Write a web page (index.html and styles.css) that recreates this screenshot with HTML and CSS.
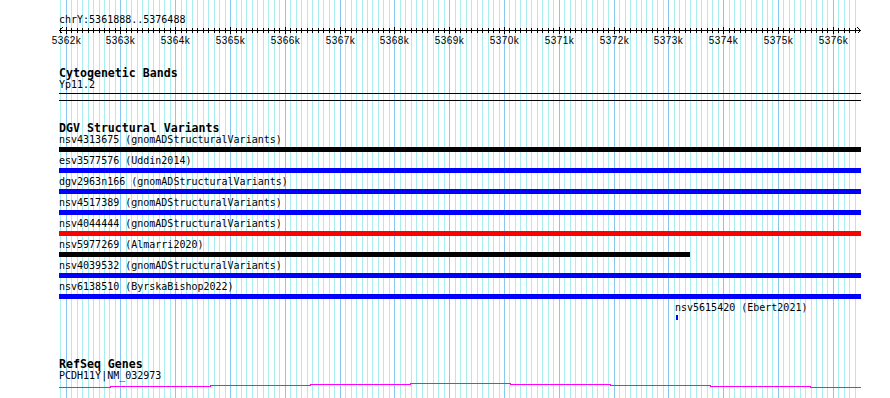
FILE: index.html
```html
<!DOCTYPE html>
<html lang="en">
<head>
    <meta charset="UTF-8">
    <title>chrY:5361888..5376488</title>
    <link rel="stylesheet" href="styles.css">
</head>
<body>

<div class="browser">
    <svg class="grid" id="grid" width="890" height="398"></svg>

    <!-- Position ruler -->
    <div class="track ruler-track">
        <div class="pos-label">chrY:5361888..5376488</div>
        <svg class="ruler" id="ruler" width="802" height="22"></svg>
    </div>

    <div class="track band-track">
        <div class="track-title">Cytogenetic Bands</div>
        <div class="feature-label">Yp11.2</div>
        <div class="band"></div>
    </div>

    <div class="track dgv-track">
        <div class="track-title">DGV Structural Variants</div>
        <div class="feature">
            <div class="feature-label">nsv4313675 (gnomADStructuralVariants)</div>
            <div class="bar bar-black"></div>
        </div>
        <div class="feature">
            <div class="feature-label">esv3577576 (Uddin2014)</div>
            <div class="bar bar-blue"></div>
        </div>
        <div class="feature">
            <div class="feature-label">dgv2963n166 (gnomADStructuralVariants)</div>
            <div class="bar bar-blue"></div>
        </div>
        <div class="feature">
            <div class="feature-label">nsv4517389 (gnomADStructuralVariants)</div>
            <div class="bar bar-blue"></div>
        </div>
        <div class="feature">
            <div class="feature-label">nsv4044444 (gnomADStructuralVariants)</div>
            <div class="bar bar-red"></div>
        </div>
        <div class="feature">
            <div class="feature-label">nsv5977269 (Almarri2020)</div>
            <div class="bar bar-black" style="width: 631px"></div>
        </div>
        <div class="feature">
            <div class="feature-label">nsv4039532 (gnomADStructuralVariants)</div>
            <div class="bar bar-blue"></div>
        </div>
        <div class="feature">
            <div class="feature-label">nsv6138510 (ByrskaBishop2022)</div>
            <div class="bar bar-blue"></div>
        </div>
        <div class="feature">
            <div class="feature-label" style="margin-left: 616px">nsv5615420 (Ebert2021)</div>
            <div class="bar bar-blue" style="margin-left: 617px; width: 2px"></div>
        </div>
    </div>

    <div class="track refseq-track">
        <div class="track-title">RefSeq Genes</div>
        <div class="feature-label">PCDH11Y|NM_032973</div>
        <svg class="gene" width="802" height="8">
            <polyline points="0,5.5 51,5.5 51,4.5 151,4.5 151,3.5 251,3.5 251,2.5 351,2.5 351,1.5 451,1.5 451,2.5 551,2.5 551,3.5 651,3.5 651,4.5 751,4.5 751,5.5 802,5.5"></polyline>
        </svg>
    </div>
</div>

<script>
    const NS = "http://www.w3.org/2000/svg";
    const start = 5361888;
    const end = 5376488;
    const scale = 800 / (end - start);

    function px(pos) {
        return Math.floor(60 + (pos - start) * scale);
    }

    function line(parent, x1, y1, x2, y2, cls) {
        const el = document.createElementNS(NS, "line");
        el.setAttribute("x1", x1);
        el.setAttribute("y1", y1);
        el.setAttribute("x2", x2);
        el.setAttribute("y2", y2);
        if (cls) el.setAttribute("class", cls);
        parent.appendChild(el);
    }

    const grid = document.getElementById("grid");
    const ruler = document.getElementById("ruler");

    // ruler axis with arrow heads on both ends
    line(ruler, 0, 4.5, 801, 4.5);
    line(ruler, 0.5, 4.5, 3.5, 1.5);
    line(ruler, 0.5, 4.5, 3.5, 7.5);
    line(ruler, 801.5, 4.5, 798.5, 1.5);
    line(ruler, 801.5, 4.5, 798.5, 7.5);

    for (let pos = 5361900; pos < end; pos += 100) {
        const x = px(pos);
        const major = pos % 1000 === 0;
        line(grid, x + 0.5, 0, x + 0.5, 398, major ? "major" : "minor");

        const rx = x - 59 + 0.5;
        if (major) {
            line(ruler, rx, 1, rx, 8);
            const label = document.createElementNS(NS, "text");
            label.setAttribute("x", rx);
            label.setAttribute("y", 17.5);
            label.textContent = (pos / 1000) + "k";
            ruler.appendChild(label);
        } else {
            line(ruler, rx, 2, rx, 7);
        }
    }
</script>

</body>
</html>
```

FILE: styles.css
```css
body {
    margin: 0;
    background-color: white;
    color: #000;
    font-family: "DejaVu Sans Mono", "Liberation Mono", monospace;
}

.browser {
    position: relative;
    width: 890px;
    height: 398px;
    padding-left: 59px;
    box-sizing: border-box;
    overflow: hidden;
}

/* background grid: one line per 100 bp, darker every kb */
.grid {
    position: absolute;
    top: 0;
    left: 0;
    shape-rendering: crispEdges;
}

.grid .minor {
    stroke: #aaeef0;
    stroke-width: 1;
}

.grid .major {
    stroke: #88c8f0;
    stroke-width: 1;
}

.track {
    position: relative;
    width: 802px;
}

.ruler-track {
    padding-top: 14px;
}

.pos-label {
    font-size: 10px;
    line-height: 12px;
}

.ruler {
    display: block;
    overflow: visible;
}

.ruler line {
    stroke: #000;
    stroke-width: 1;
    shape-rendering: crispEdges;
}

.ruler text {
    font-family: "Liberation Sans", Arial, sans-serif;
    font-size: 10px;
    letter-spacing: 0.5px;
    text-anchor: middle;
    fill: #000;
}

.track-title {
    font-weight: bold;
    font-size: 11.6px;
    line-height: 12px;
    white-space: nowrap;
}

.feature-label {
    font-size: 10px;
    line-height: 12px;
    white-space: nowrap;
}

.band-track {
    margin-top: 19px;
}

.band {
    margin-top: 2px;
    height: 8px;
    box-sizing: border-box;
    border-top: 1px solid #000;
    border-bottom: 1px solid #000;
}

.dgv-track {
    margin-top: 21px;
}

.feature {
    height: 21px;
}

.bar {
    margin-top: 1px;
    height: 5px;
    width: 802px;
}

.bar-black {
    background-color: #000;
}

.bar-blue {
    background-color: #0000ff;
}

.bar-red {
    background-color: #ff0000;
}

.refseq-track {
    margin-top: 35px;
}

.gene {
    display: block;
    shape-rendering: crispEdges;
}

.gene polyline {
    fill: none;
    stroke: #ff00ff;
    stroke-width: 1;
}
```
